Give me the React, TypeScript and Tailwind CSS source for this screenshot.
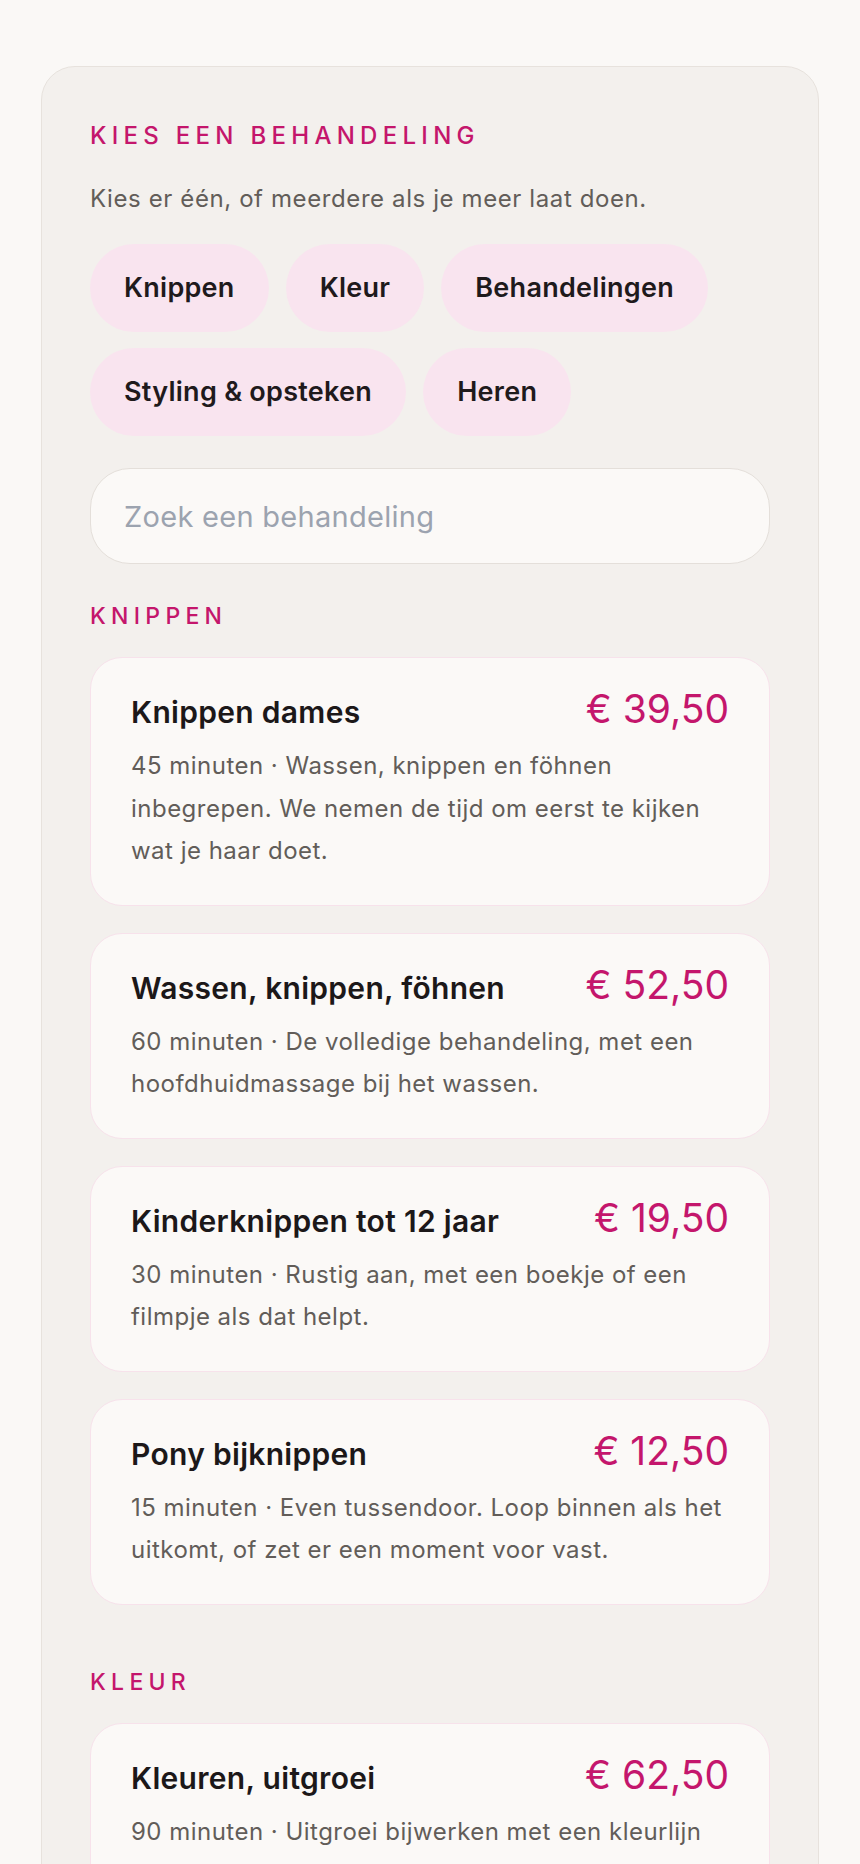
import React from "react";

type Item = { title: string; price: string; desc: string };

const knippen: Item[] = [
  {
    title: "Knippen dames",
    price: "€\u00a039,50",
    desc: "45 minuten · Wassen, knippen en föhnen inbegrepen. We nemen de tijd om eerst te kijken wat je haar doet.",
  },
  {
    title: "Wassen, knippen, föhnen",
    price: "€\u00a052,50",
    desc: "60 minuten · De volledige behandeling, met een hoofdhuidmassage bij het wassen.",
  },
  {
    title: "Kinderknippen tot 12 jaar",
    price: "€\u00a019,50",
    desc: "30 minuten · Rustig aan, met een boekje of een filmpje als dat helpt.",
  },
  {
    title: "Pony bijknippen",
    price: "€\u00a012,50",
    desc: "15 minuten · Even tussendoor. Loop binnen als het uitkomt, of zet er een moment voor vast.",
  },
];

const kleur: Item[] = [
  {
    title: "Kleuren, uitgroei",
    price: "€\u00a062,50",
    desc: "90 minuten · Uitgroei bijwerken met een kleurlijn naar keuze, zodat het weer als één geheel oogt.",
  },
  {
    title: "Highlights",
    price: "€\u00a089,50",
    desc: "120 minuten · Lichte accenten die meebewegen met je haar.",
  },
];

const chips = ["Knippen", "Kleur", "Behandelingen", "Styling & opsteken", "Heren"];

function Card({ item }: { item: Item }) {
  return (
    <div className="rounded-[32px] border border-[#f7e2eb] bg-[#fbf9f7] px-[40px] pt-[28px] pb-[32px]">
      <div className="flex items-baseline justify-between gap-4">
        <h3 className="text-[30px] font-semibold leading-[46px] tracking-[0.01em] text-[#1c1819]">
          {item.title}
        </h3>
        <span className="shrink-0 text-[39px] font-normal leading-[46px] text-[#c4166c]">
          {item.price}
        </span>
      </div>
      <p className="mt-[10px] text-[24px] leading-[42.5px] tracking-[0.02em] text-[#625d59]">{item.desc}</p>
    </div>
  );
}

function Section({ label, items, first }: { label: string; items: Item[]; first?: boolean }) {
  return (
    <section className={first ? "mt-[36px]" : "mt-[61px]"}>
      <h2 className="text-[23px] font-medium uppercase leading-[32px] tracking-[0.23em] text-[#c4166c]">
        {label}
      </h2>
      <div className="mt-[25px] flex flex-col gap-[27px]">
        {items.map((it) => (
          <Card key={it.title} item={it} />
        ))}
      </div>
    </section>
  );
}

export default function App() {
  return (
    <div
      className="min-h-screen bg-[#faf8f6] px-[41px] pt-[66px] pb-[60px]"
      style={{ fontFamily: "Inter, 'Noto Sans', sans-serif" }}
    >
      <div className="rounded-[34px] border border-[#e7e2dd] bg-[#f3f0ed] px-[48px] pt-[51px] pb-[48px]">
        <h1 className="text-[24px] font-medium uppercase leading-[36px] tracking-[0.22em] text-[#c4166c]">
          Kies een behandeling
        </h1>
        <p className="mt-[27px] text-[24px] leading-[36px] tracking-[0.025em] text-[#625d59]">
          Kies er één, of meerdere als je meer laat doen.
        </p>
        <div className="mt-[27px] flex flex-wrap gap-x-[17px] gap-y-[16px]">
          {chips.map((c) => (
            <button
              key={c}
              type="button"
              className="flex h-[88px] items-center rounded-full bg-[#f9e4ef] px-[34px] text-[27px] font-semibold tracking-[0.01em] text-[#1f1a1c]"
            >
              {c}
            </button>
          ))}
        </div>
        <input
          type="text"
          placeholder="Zoek een behandeling"
          className="mt-[32px] block h-[96px] w-full rounded-[40px] border border-[#e4dfda] bg-[#fbf9f7] px-[33px] text-[29px] tracking-[0.01em] text-[#1c1819] outline-none placeholder:text-[#9ca3af]"
        />
        <Section label="Knippen" items={knippen} first />
        <Section label="Kleur" items={kleur} />
      </div>
    </div>
  );
}
